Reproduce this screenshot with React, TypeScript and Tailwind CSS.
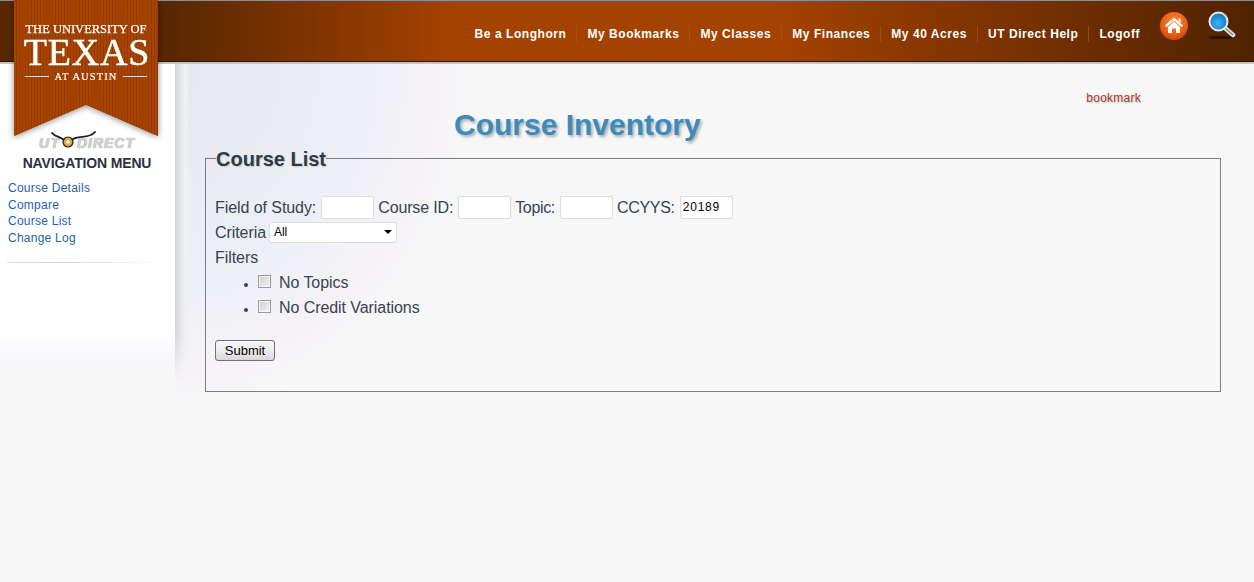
// App.tsx
const navItems = ['Be a Longhorn', 'My Bookmarks', 'My Classes', 'My Finances', 'My 40 Acres', 'UT Direct Help', 'Logoff'];
const sideLinks = ['Course Details', 'Compare', 'Course List', 'Change Log'];

function HomeIcon() {
    return (
        <svg width="30" height="30" viewBox="0 0 30 30">
            <defs>
                <radialGradient id="homeBall" cx="50%" cy="35%" r="65%">
                    <stop offset="0%" stopColor="#f58a3c" />
                    <stop offset="70%" stopColor="#ea5f12" />
                    <stop offset="100%" stopColor="#c9480a" />
                </radialGradient>
            </defs>
            <circle cx="15" cy="15" r="14" fill="url(#homeBall)" />
            <path d="M15 6.5 L24 14.5 L22.3 16 L15 9.6 L7.7 16 L6 14.5 Z" fill="#fff" />
            <path d="M19.5 7.5 h2.2 v4.6 l-2.2 -2 Z" fill="#fff" />
            <path d="M9 16 L15 10.8 L21 16 V22 H17 V17.5 H13 V22 H9 Z" fill="#fff" />
        </svg>
    );
}

function SearchIcon() {
    return (
        <svg width="28" height="30" viewBox="0 0 28 30">
            <defs>
                <radialGradient id="lens" cx="45%" cy="60%" r="60%">
                    <stop offset="0%" stopColor="#3fb4ee" />
                    <stop offset="100%" stopColor="#0f74c0" />
                </radialGradient>
            </defs>
            <ellipse cx="14" cy="26.5" rx="13" ry="1.6" fill="#2a1200" />
            <path d="M16.5 16.5 L25 24" stroke="#dfe3e6" strokeWidth="4.5" strokeLinecap="round" />
            <path d="M17.5 17.5 L25 24" stroke="#77808a" strokeWidth="1.2" />
            <circle cx="10.5" cy="10.5" r="9" fill="url(#lens)" stroke="#e8ecef" strokeWidth="2" />
        </svg>
    );
}

function UtDirectLogo() {
    return (
        <div className="relative h-[19px] w-[97px] ml-[38px]">
            <div className="absolute left-0 top-[5px] flex w-full items-center justify-between italic font-bold text-[14px] leading-[14px] text-[#d4d5d6] [text-shadow:0_0_1px_#77797b]">
                <span className="ml-[1px] tracking-[1.5px]">UT</span>
                <span className="tracking-[1px]">DIRECT</span>
            </div>
            <svg className="absolute left-[13px] top-0" width="46" height="19" viewBox="0 0 46 19">
                <path d="M1 2 C4 6 9 5 13 9" fill="none" stroke="#1c1c1c" strokeWidth="1.8" strokeLinecap="round" />
                <path d="M21 9 C27 3 37 9 44 1" fill="none" stroke="#1c1c1c" strokeWidth="1.8" strokeLinecap="round" />
                <circle cx="17" cy="11" r="5" fill="#e8a04a" stroke="#1c1c1c" strokeWidth="1.2" />
                <circle cx="17" cy="11" r="1.8" fill="#fff" />
            </svg>
        </div>
    );
}

function Banner() {
    return (
        <div className="absolute left-[14px] top-0 z-10 drop-shadow-[0_1px_3px_rgba(0,0,0,0.45)]">
            <div className="h-[136px] w-[144px] bg-[#a44200] bg-[repeating-linear-gradient(90deg,#a84400_0px,#a84400_2px,#933a00_2px,#933a00_3px)] [clip-path:polygon(0_0,100%_0,100%_100%,50%_77%,0_100%)] font-['Liberation_Serif',serif] text-white">
                <div className="pt-[23px] text-center text-[12.5px] leading-[13px] tracking-[0px] whitespace-nowrap [-webkit-text-stroke:0.25px_#fff]">THE UNIVERSITY OF</div>
                <div className="pl-[2px] text-center text-[38px] leading-[32px] tracking-[0.8px] whitespace-nowrap [-webkit-text-stroke:0.5px_#fff]">TEXAS</div>
                <div className="mt-[3px] flex items-center justify-center gap-[5px] px-[11px] text-[10.5px] leading-[11px] tracking-[1.1px] whitespace-nowrap [-webkit-text-stroke:0.2px_#fff]">
                    <span className="h-px flex-1 bg-white/80" />
                    AT AUSTIN
                    <span className="h-px flex-1 bg-white/80" />
                </div>
            </div>
        </div>
    );
}

export default function App() {
    return (
        <div className="relative min-h-screen overflow-hidden bg-[#f7f7f8] font-['Liberation_Sans',Arial,sans-serif] text-[#38434f]">
            <Banner />

            {/* top bar */}
            <header className="flex h-[64px] items-start justify-end border-t border-b-[2px] border-t-[#8a8f96] border-b-[#c4c4c4] bg-[linear-gradient(90deg,#5a2800_0%,#5a2800_14%,#7c3300_24%,#a44200_36%,#a44200_62%,#8c3800_72%,#6e2e00_86%,#4f2300_100%)] shadow-[inset_0_-1px_0_#2a1200]">
                <nav className="mt-[25px] flex items-center text-[12px] font-bold leading-[16px] tracking-[0.55px] text-white">
                    {navItems.map((item, i) => (
                        <span key={item} className={i === 0 ? 'pr-[10px]' : 'border-l border-[#b8561c]/60 px-[10px]'}>
                            {item}
                        </span>
                    ))}
                </nav>
                <div className="mt-[10px] ml-[9px] mr-[18px] flex items-start gap-[19px]">
                    <HomeIcon />
                    <SearchIcon />
                </div>
            </header>

            <div className="flex">
                {/* left nav */}
                <aside className="h-[316px] w-[175px] shrink-0 bg-[linear-gradient(180deg,#fff_0%,#fff_84%,#f7f7fa_93%,#f7f7f8_100%)] pt-[67px]">
                    <UtDirectLogo />
                    <h2 className="mt-[4px] text-center text-[14px] font-bold leading-[18px] tracking-[-0.15px] text-[#2b3240] whitespace-nowrap ml-[-1px]">NAVIGATION MENU</h2>
                    <ul className="mt-[8px] pl-[8px] text-[12px] leading-[16.7px] tracking-[0.25px] text-[#1f5fae]">
                        {sideLinks.map(link => (
                            <li key={link}><a href="#">{link}</a></li>
                        ))}
                    </ul>
                    <div className="mt-[15px] ml-[7px] h-px w-[158px] bg-[linear-gradient(90deg,#dddddd,#d8d8d8_40%,#ffffff)]" />
                </aside>

                {/* page body */}
                <main className="min-w-0 flex-1 bg-[radial-gradient(ellipse_300px_350px_at_0px_0px,#e4e8ef_0%,#e9ecf2_35%,#eff0f7_65%,#f6f3f6_88%,#f7f7f8_100%)]">
                    <div className="h-[316px] w-[15px] float-left bg-[linear-gradient(90deg,#d3d6da,#f0f1f4_70%,transparent)] [mask-image:linear-gradient(180deg,#000_85%,transparent)]" />
                    <div className="pr-[113px] pt-[26px] text-right text-[12px] leading-[16px] tracking-[0.25px] text-[#a83a16] [text-shadow:1px_1px_2px_rgba(90,90,140,0.35)]">
                        <a href="#">bookmark</a>
                    </div>
                    <h1 className="mt-[1px] pl-[279px] text-[30px] font-bold leading-[36px] text-[#3b8bbd] whitespace-nowrap [text-shadow:2px_2px_3px_rgba(0,0,0,0.3)]">Course Inventory</h1>

                    <fieldset className="mt-[3px] ml-[30px] mr-[33px] h-[246px] border border-[#7d7d7d] px-[9px]">
                        <legend className="ml-[1px] pt-[2px] text-[20px] font-bold leading-[23px] text-[#2e3a46] [text-shadow:1px_1px_1px_rgba(0,0,0,0.15)]">Course List</legend>

                        <div className="mt-[23px] flex h-[26px] items-center text-[16px] whitespace-nowrap">
                            <label className="pt-[2px] tracking-[-0.07px]">Field of Study:</label>
                            <input className="ml-[5px] mr-[4px] h-[23px] w-[53px] rounded-[2px] border border-[#dcdde0] bg-white" />
                            <label className="pt-[2px] tracking-[-0.15px]">Course ID:</label>
                            <input className="ml-[5px] mr-[4px] h-[23px] w-[53px] rounded-[2px] border border-[#dcdde0] bg-white" />
                            <label className="pt-[2px] tracking-[-0.35px]">Topic:</label>
                            <input className="ml-[5px] mr-[4px] h-[23px] w-[53px] rounded-[2px] border border-[#dcdde0] bg-white" />
                            <label className="pt-[2px] tracking-[-0.3px]">CCYYS:</label>
                            <input defaultValue="20189" className="ml-[5px] h-[23px] w-[53px] rounded-[2px] border border-[#dcdde0] bg-white px-[2px] text-[12px] tracking-[0.8px] text-black" />
                        </div>

                        <div className="flex h-[24px] items-center text-[16px] tracking-[-0.07px]">
                            <label className="pt-[2px]">Criteria</label>
                            <span className="relative ml-[3px] inline-block">
                                <select className="block h-[21px] w-[128px] appearance-none rounded-[2px] border border-[#dcdde0] bg-white pl-[4px] text-[12px] text-black">
                                    <option>All</option>
                                </select>
                                <span className="absolute right-[5px] top-[8px] h-0 w-0 border-x-[4px] border-t-[4px] border-x-transparent border-t-black" />
                            </span>
                        </div>

                        <div className="mt-[2px] text-[16px] leading-[24px] tracking-[-0.07px]">Filters</div>
                        <ul className="list-disc pl-[43px] text-[16px] leading-[25px] tracking-[-0.07px] marker:text-[12px]">
                            {['No Topics', 'No Credit Variations'].map(label => (
                                <li key={label}>
                                    <label className="flex items-center gap-[8px]">
                                        <input type="checkbox" className="mb-[2px] h-[13px] w-[13px] appearance-none border border-[#9a9a9a] bg-[linear-gradient(135deg,#cfcfcf,#f4f4f4)] shadow-[inset_0_0_0_1px_#f4f4f4]" />
                                        {label}
                                    </label>
                                </li>
                            ))}
                        </ul>

                        <button type="button" className="mt-[20px] h-[21px] w-[60px] rounded-[3px] border border-[#707070] bg-[linear-gradient(180deg,#f6f6f6,#ededed_50%,#d6d6d6)] text-[13px] leading-[17px] text-black">Submit</button>
                    </fieldset>
                </main>
            </div>
        </div>
    );
}
